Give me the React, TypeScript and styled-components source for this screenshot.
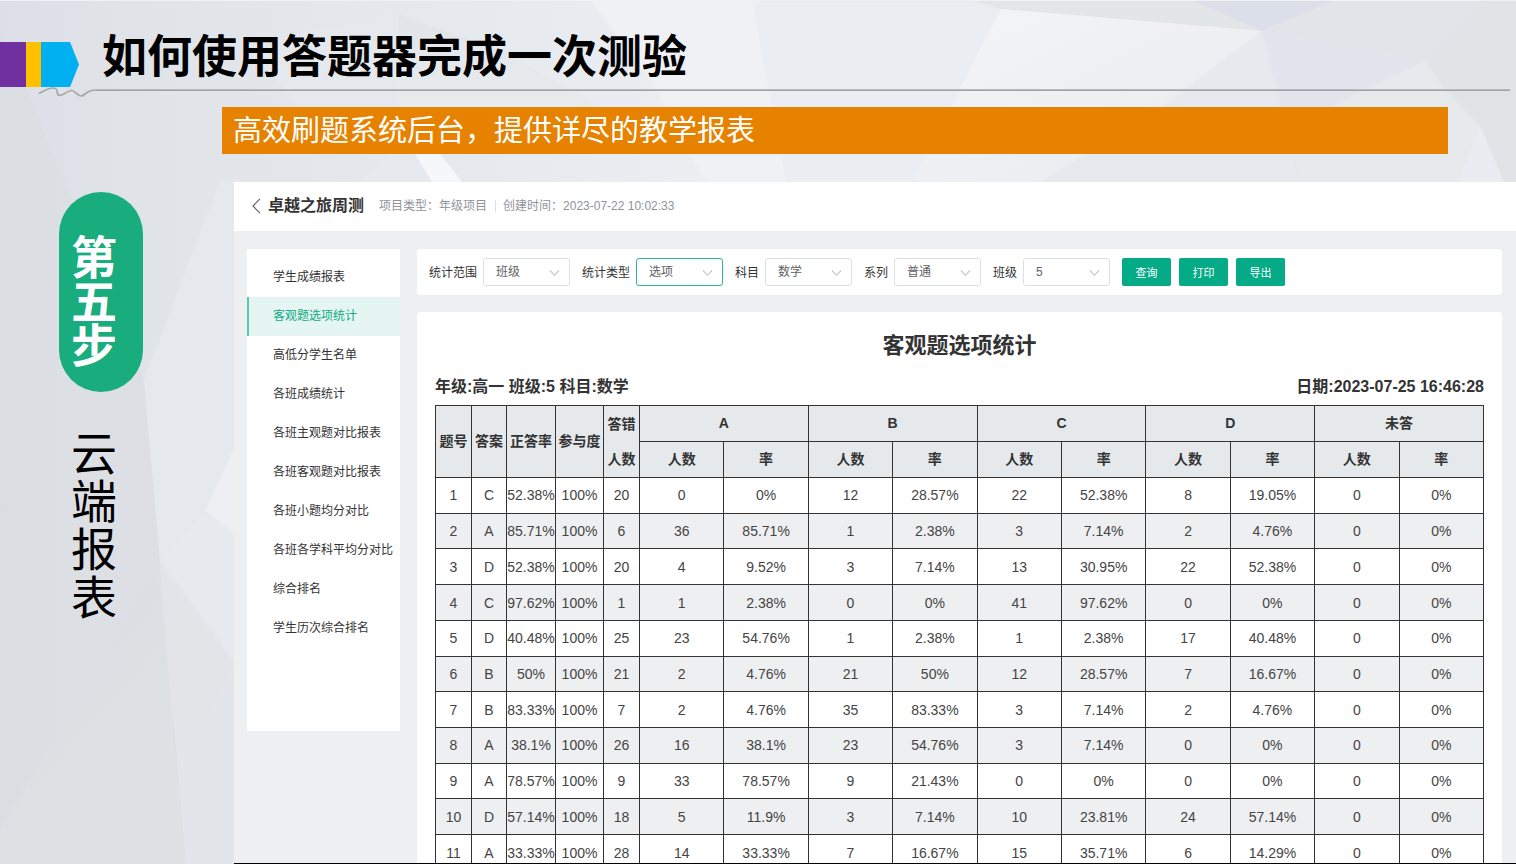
import React from 'react';
import styled, { createGlobalStyle } from 'styled-components';

const GlobalStyle = createGlobalStyle`
  *, *::before, *::after { box-sizing: border-box; }
  body {
    margin: 0;
    font-family: "Liberation Sans", "Noto Sans CJK SC", sans-serif;
    color: #333;
  }
  h1, h2, p, ul { margin: 0; padding: 0; }
`;

const Slide = styled.main`
  position: relative;
  display: flex;
  flex-direction: column;
  height: 100vh;
  overflow: hidden;
  background: #e4e7eb;
`;

const Backdrop = styled.svg`
  position: absolute;
  inset: 0;
  width: 100%;
  height: 100%;
`;

const SlideHeader = styled.header`
  position: relative;
  padding-top: 28px;
`;

const TitleRow = styled.div`
  display: flex;
  height: 59px;
  gap: 22px;
`;

const Ribbon = styled.svg`
  align-self: flex-end;
  width: 80px;
  height: 45px;
`;

const SlideTitle = styled.h1`
  font-size: 45px;
  line-height: 60px;
  color: #000;
  white-space: nowrap;
`;

const Underline = styled.div`
  display: flex;
  height: 10px;
  margin: 0 6px 0 38px;
`;

const Squiggle = styled.svg`
  flex: none;
  width: 58px;
  height: 10px;
  overflow: visible;
`;

const Rule = styled.div`
  flex: 1;
  height: 2px;
  margin-top: 2px;
  background: linear-gradient(#b8b9bb 50%, #a2a2a2 50%);
`;

const Banner = styled.p`
  position: relative;
  height: 47px;
  margin: 10px 68px 28px 222px;
  padding-left: 11px;
  background: #e68200;
  color: #fff;
  font-size: 29px;
  line-height: 48px;
  white-space: nowrap;
`;

const Content = styled.div`
  position: relative;
  flex: 1;
  min-height: 0;
  display: grid;
  grid-template-columns: 234px minmax(0, 1fr);
`;

const StepColumn = styled.div`
  padding: 10px 0 0 59px;
`;

const StepPill = styled.div`
  width: 84px;
  height: 200px;
  padding: 44px 26px 0 12px;
  border-radius: 42px;
  background: #19ad7e;
  color: #fff;
  font-size: 46px;
  font-weight: bold;
  line-height: 44px;
`;

const StepName = styled.div`
  width: 46px;
  margin: 38px 0 0 12px;
  color: #000;
  font-size: 46px;
  line-height: 48px;
`;

const Window = styled.section`
  display: flex;
  flex-direction: column;
  min-height: 0;
  overflow: hidden;
  background: #eeeff1;
  border-bottom: 1px solid #000;
`;

const TopBar = styled.header`
  flex: none;
  display: flex;
  align-items: center;
  height: 49px;
  padding: 0 17px 2px;
  background: #fff;
`;

const BackButton = styled.button`
  display: flex;
  width: 17px;
  padding: 0;
  border: 0;
  background: none;
  color: #666;
`;

const ProjectName = styled.h2`
  margin-right: 15px;
  font-size: 16px;
  line-height: 24px;
`;

const Meta = styled.span`
  color: #8f9399;
  font-size: 12px;
  line-height: 24px;
  & + & {
    margin-left: 8px;
    padding-left: 8px;
    background: linear-gradient(#dcdfe6, #dcdfe6) 0 50% / 1px 12px no-repeat;
  }
`;

const Workspace = styled.div`
  flex: 1;
  min-height: 0;
  display: flex;
  align-items: flex-start;
  gap: 17px;
  padding: 18px 14px 0 13px;
`;

const Sidebar = styled.nav`
  flex: none;
  width: 153px;
  min-height: 482px;
  padding-top: 9px;
  background: #fff;
`;

const MenuList = styled.ul`
  list-style: none;
`;

const MenuLink = styled.a<{ $active?: boolean }>`
  display: block;
  padding-left: 24px;
  border-left: 2px solid ${p => (p.$active ? '#5cc8ac' : 'transparent')};
  background: ${p => (p.$active ? '#e5f6f2' : 'transparent')};
  color: ${p => (p.$active ? '#10aa86' : '#333')};
  font-size: 12px;
  line-height: 39px;
  text-decoration: none;
  white-space: nowrap;
`;

const Main = styled.div`
  flex: 1;
  min-width: 0;
  display: flex;
  flex-direction: column;
  gap: 17px;
`;

const FilterBar = styled.form`
  display: flex;
  align-items: center;
  gap: 12px;
  height: 46px;
  padding: 0 12px 1px;
  border-radius: 4px;
  background: #fff;
`;

const Field = styled.label`
  display: flex;
  align-items: center;
  gap: 6px;
  font-size: 12px;
  white-space: nowrap;
`;

const SelectBox = styled.span`
  position: relative;
  display: flex;
`;

const Select = styled.select<{ $focused?: boolean }>`
  appearance: none;
  width: 87px;
  height: 28px;
  padding: 0 24px 0 12px;
  border: 1px solid ${p => (p.$focused ? '#2db895' : '#dcdfe6')};
  border-radius: 3px;
  background: #fff;
  color: #606266;
  font: inherit;
`;

const Chevron = styled.svg`
  position: absolute;
  right: 10px;
  top: 11px;
  width: 11px;
  height: 8px;
  pointer-events: none;
`;

const Actions = styled.div`
  display: flex;
  gap: 8px;
`;

const ActionButton = styled.button`
  width: 49px;
  height: 28px;
  padding: 0;
  border: 0;
  border-radius: 2px;
  background: #05aa86;
  color: #fff;
  font-family: inherit;
  font-size: 11px;
`;

const Report = styled.article`
  padding: 18px 18px 0;
  border-radius: 4px;
  background: #fff;
`;

const ReportTitle = styled.h2`
  font-size: 22px;
  line-height: 32px;
  text-align: center;
`;

const ReportInfo = styled.div`
  display: flex;
  justify-content: space-between;
  margin: 13px 0 6px;
  font-size: 16px;
  font-weight: bold;
  line-height: 24px;
`;

const Table = styled.table`
  width: 100%;
  height: 466px;
  table-layout: fixed;
  border-collapse: collapse;
  font-size: 14px;
  text-align: center;
  color: #444;
`;

const Col = styled.col<{ $width?: number }>`
  width: ${p => (p.$width ? `${p.$width}px` : 'auto')};
`;

const HeadCell = styled.th`
  padding: 0;
  border: 1px solid #333;
  background: #e5e9ec;
  color: #333;
  line-height: 35px;
  white-space: nowrap;
`;

const Row = styled.tr`
  &:nth-child(even) { background: #eeeff1; }
`;

const Cell = styled.td`
  padding: 0;
  border: 1px solid #333;
  white-space: nowrap;
`;

const menu = [
  '学生成绩报表', '客观题选项统计', '高低分学生名单', '各班成绩统计', '各班主观题对比报表',
  '各班客观题对比报表', '各班小题均分对比', '各班各学科平均分对比', '综合排名', '学生历次综合排名',
];

const filters = [
  { label: '统计范围', value: '班级' },
  { label: '统计类型', value: '选项', focused: true },
  { label: '科目', value: '数学' },
  { label: '系列', value: '普通' },
  { label: '班级', value: '5' },
];

const options = ['A', 'B', 'C', 'D', '未答'];

const rows = [
  ['1', 'C', '52.38%', '100%', '20', '0', '0%', '12', '28.57%', '22', '52.38%', '8', '19.05%', '0', '0%'],
  ['2', 'A', '85.71%', '100%', '6', '36', '85.71%', '1', '2.38%', '3', '7.14%', '2', '4.76%', '0', '0%'],
  ['3', 'D', '52.38%', '100%', '20', '4', '9.52%', '3', '7.14%', '13', '30.95%', '22', '52.38%', '0', '0%'],
  ['4', 'C', '97.62%', '100%', '1', '1', '2.38%', '0', '0%', '41', '97.62%', '0', '0%', '0', '0%'],
  ['5', 'D', '40.48%', '100%', '25', '23', '54.76%', '1', '2.38%', '1', '2.38%', '17', '40.48%', '0', '0%'],
  ['6', 'B', '50%', '100%', '21', '2', '4.76%', '21', '50%', '12', '28.57%', '7', '16.67%', '0', '0%'],
  ['7', 'B', '83.33%', '100%', '7', '2', '4.76%', '35', '83.33%', '3', '7.14%', '2', '4.76%', '0', '0%'],
  ['8', 'A', '38.1%', '100%', '26', '16', '38.1%', '23', '54.76%', '3', '7.14%', '0', '0%', '0', '0%'],
  ['9', 'A', '78.57%', '100%', '9', '33', '78.57%', '9', '21.43%', '0', '0%', '0', '0%', '0', '0%'],
  ['10', 'D', '57.14%', '100%', '18', '5', '11.9%', '3', '7.14%', '10', '23.81%', '24', '57.14%', '0', '0%'],
  ['11', 'A', '33.33%', '100%', '28', '14', '33.33%', '7', '16.67%', '15', '35.71%', '6', '14.29%', '0', '0%'],
];

function LowPolyBackdrop() {
  return (
    <Backdrop viewBox="0 0 1516 864" preserveAspectRatio="none" aria-hidden="true">
      <defs>
        <linearGradient id="base" x1="0" y1="0" x2="1" y2="0">
          <stop offset="0" stopColor="#dcdfe7" />
          <stop offset="0.06" stopColor="#dfe2e7" />
          <stop offset="0.16" stopColor="#e2e5e9" />
          <stop offset="0.35" stopColor="#e7eaee" />
          <stop offset="0.5" stopColor="#edeff3" />
          <stop offset="0.75" stopColor="#e8eaef" />
          <stop offset="1" stopColor="#e0e4e6" />
        </linearGradient>
        <linearGradient id="shade" gradientUnits="userSpaceOnUse" x1="0" y1="0" x2="170" y2="0">
          <stop offset="0" stopColor="#d9dce1" />
          <stop offset="0.35" stopColor="#dcdfe4" />
          <stop offset="1" stopColor="#dddfe5" />
        </linearGradient>
        <linearGradient id="corner" gradientUnits="userSpaceOnUse" x1="60" y1="660" x2="170" y2="760">
          <stop offset="0" stopColor="#dbdfe3" />
          <stop offset="1" stopColor="#dee2e4" />
        </linearGradient>
        <linearGradient id="peak" x1="0" y1="0" x2="0" y2="1">
          <stop offset="0" stopColor="#e1e5e9" />
          <stop offset="1" stopColor="#e8ebee" />
        </linearGradient>
        <linearGradient id="facet" x1="0" y1="0" x2="1" y2="1">
          <stop offset="0" stopColor="#f4f5f9" />
          <stop offset="1" stopColor="#e7eaee" />
        </linearGradient>
      </defs>
      <rect width="1516" height="864" fill="url(#base)" />
      <polygon points="0,30 26,88 64,180 144,380 186,864 0,864" fill="url(#shade)" />
      <polygon points="0,830 156,568 186,864 0,864" fill="url(#corner)" />
      <polygon points="144,380 220,180 240,180 240,440 205,510 160,560" fill="#e5e8ec" />
      <polygon points="240,436 205,510 240,540" fill="#edeff2" />
      <polygon points="205,510 240,540 240,670 160,560" fill="#e6e9ed" />
      <polygon points="160,560 240,670 240,864 186,864" fill="#e2e5e9" />
      <polygon points="160,570 234,664 206,720 172,718" fill="#e3e4e8" />
      <polygon points="398,14 245,44 300,107 398,107" fill="#e5e8ec" />
      <polygon points="398,14 500,50 600,107 398,107" fill="url(#peak)" />
      <polygon points="360,182 390,154 416,154 434,182" fill="#e6e9ed" />
      <polygon points="415,154 440,154 462,182 432,182" fill="#f6f7fb" />
      <polygon points="590,0 752,0 786,182 706,182 650,80" fill="#eff1f5" />
      <polygon points="752,0 978,0 1001,12 912,182 786,182" fill="#eaedf1" />
      <polygon points="970,0 1192,0 1262,31 1001,9" fill="#e3e6e9" />
      <polygon points="1192,0 1335,0 1262,31" fill="#dbdfe9" />
      <polygon points="1001,9 1262,31 1160,108 1040,182 912,182" fill="url(#facet)" />
      <polygon points="1262,31 1281,120 1300,182 1130,182 1040,182 1160,108" fill="#e6e9ed" />
      <polygon points="1335,0 1486,0 1425,61 1384,54 1262,31" fill="#e1e4e8" />
      <polygon points="1262,31 1425,61 1330,107 1281,107" fill="#e2e5ec" />
      <polygon points="1425,61 1486,0 1516,0 1516,182 1504,182 1480,126 1444,88" fill="#e0e4e6" />
      <polygon points="1425,61 1444,88 1480,126 1458,182 1300,182 1281,107 1330,107" fill="#e6eaed" />
      <polygon points="1480,126 1504,182 1458,182" fill="#e9ecf1" />
      <rect width="1516" height="1" fill="#f0f2f2" />
    </Backdrop>
  );
}

export default function App() {
  return (
    <>
      <GlobalStyle />
      <Slide>
        <LowPolyBackdrop />
        <SlideHeader>
          <TitleRow>
            <Ribbon viewBox="0 0 80 45" aria-hidden="true">
              <rect width="26" height="45" fill="#7030a0" />
              <rect x="26" width="15" height="45" fill="#ffc000" />
              <path d="M41 0H70L79 22.500L70 45H41Z" fill="#00b0f0" />
            </Ribbon>
            <SlideTitle>如何使用答题器完成一次测验</SlideTitle>
          </TitleRow>
          <Underline>
            <Squiggle viewBox="38 87 58 10" fill="none" stroke="#a6a6a6" strokeWidth="1.7" aria-hidden="true">
              <path d="M39 93.500C44 91 48 88 53 88C60 88 55 94 59 95.300C64 96 67 90.300 71.500 90.500C76 91 77 96 81 96C85 96 86 90 96 90" />
            </Squiggle>
            <Rule />
          </Underline>
        </SlideHeader>
        <Banner>高效刷题系统后台，提供详尽的教学报表</Banner>
        <Content>
          <StepColumn>
            <StepPill>第五步</StepPill>
            <StepName>云端报表</StepName>
          </StepColumn>
          <Window>
            <TopBar>
              <BackButton type="button" aria-label="返回">
                <svg width="11" height="16" viewBox="0 0 11 16" fill="none" stroke="currentColor" strokeWidth="1.2">
                  <path d="M9 0.800L2 8L9 15.200" />
                </svg>
              </BackButton>
              <ProjectName>卓越之旅周测</ProjectName>
              <Meta>项目类型：年级项目</Meta>
              <Meta>创建时间：2023-07-22 10:02:33</Meta>
            </TopBar>
            <Workspace>
              <Sidebar>
                <MenuList>
                  {menu.map((item, i) => (
                    <li key={item}>
                      <MenuLink href="#" $active={i === 1}>{item}</MenuLink>
                    </li>
                  ))}
                </MenuList>
              </Sidebar>
              <Main>
                <FilterBar>
                  {filters.map(f => (
                    <Field key={f.label}>
                      {f.label}
                      <SelectBox>
                        <Select $focused={f.focused} defaultValue={f.value}>
                          <option>{f.value}</option>
                        </Select>
                        <Chevron viewBox="0 0 11 8" fill="none" stroke="#c0c4cc" strokeWidth="1.1" aria-hidden="true">
                          <path d="M1 1.500L5.500 6.300L10 1.500" />
                        </Chevron>
                      </SelectBox>
                    </Field>
                  ))}
                  <Actions>
                    <ActionButton type="button">查询</ActionButton>
                    <ActionButton type="button">打印</ActionButton>
                    <ActionButton type="button">导出</ActionButton>
                  </Actions>
                </FilterBar>
                <Report>
                  <ReportTitle>客观题选项统计</ReportTitle>
                  <ReportInfo>
                    <span>年级:高一 班级:5 科目:数学</span>
                    <span>日期:2023-07-25 16:46:28</span>
                  </ReportInfo>
                  <Table>
                    <colgroup>
                      <Col $width={36} />
                      <Col $width={35} />
                      <Col $width={49} />
                      <Col $width={48} />
                      <Col $width={36} />
                      {options.map(o => (
                        <React.Fragment key={o}>
                          <Col />
                          <Col />
                        </React.Fragment>
                      ))}
                    </colgroup>
                    <thead>
                      <tr>
                        <HeadCell rowSpan={2}>题号</HeadCell>
                        <HeadCell rowSpan={2}>答案</HeadCell>
                        <HeadCell rowSpan={2}>正答率</HeadCell>
                        <HeadCell rowSpan={2}>参与度</HeadCell>
                        <HeadCell rowSpan={2}>答错<br />人数</HeadCell>
                        {options.map(o => <HeadCell key={o} colSpan={2}>{o}</HeadCell>)}
                      </tr>
                      <tr>
                        {options.map(o => (
                          <React.Fragment key={o}>
                            <HeadCell>人数</HeadCell>
                            <HeadCell>率</HeadCell>
                          </React.Fragment>
                        ))}
                      </tr>
                    </thead>
                    <tbody>
                      {rows.map(r => (
                        <Row key={r[0]}>
                          {r.map((value, i) => <Cell key={i}>{value}</Cell>)}
                        </Row>
                      ))}
                    </tbody>
                  </Table>
                </Report>
              </Main>
            </Workspace>
          </Window>
        </Content>
      </Slide>
    </>
  );
}
